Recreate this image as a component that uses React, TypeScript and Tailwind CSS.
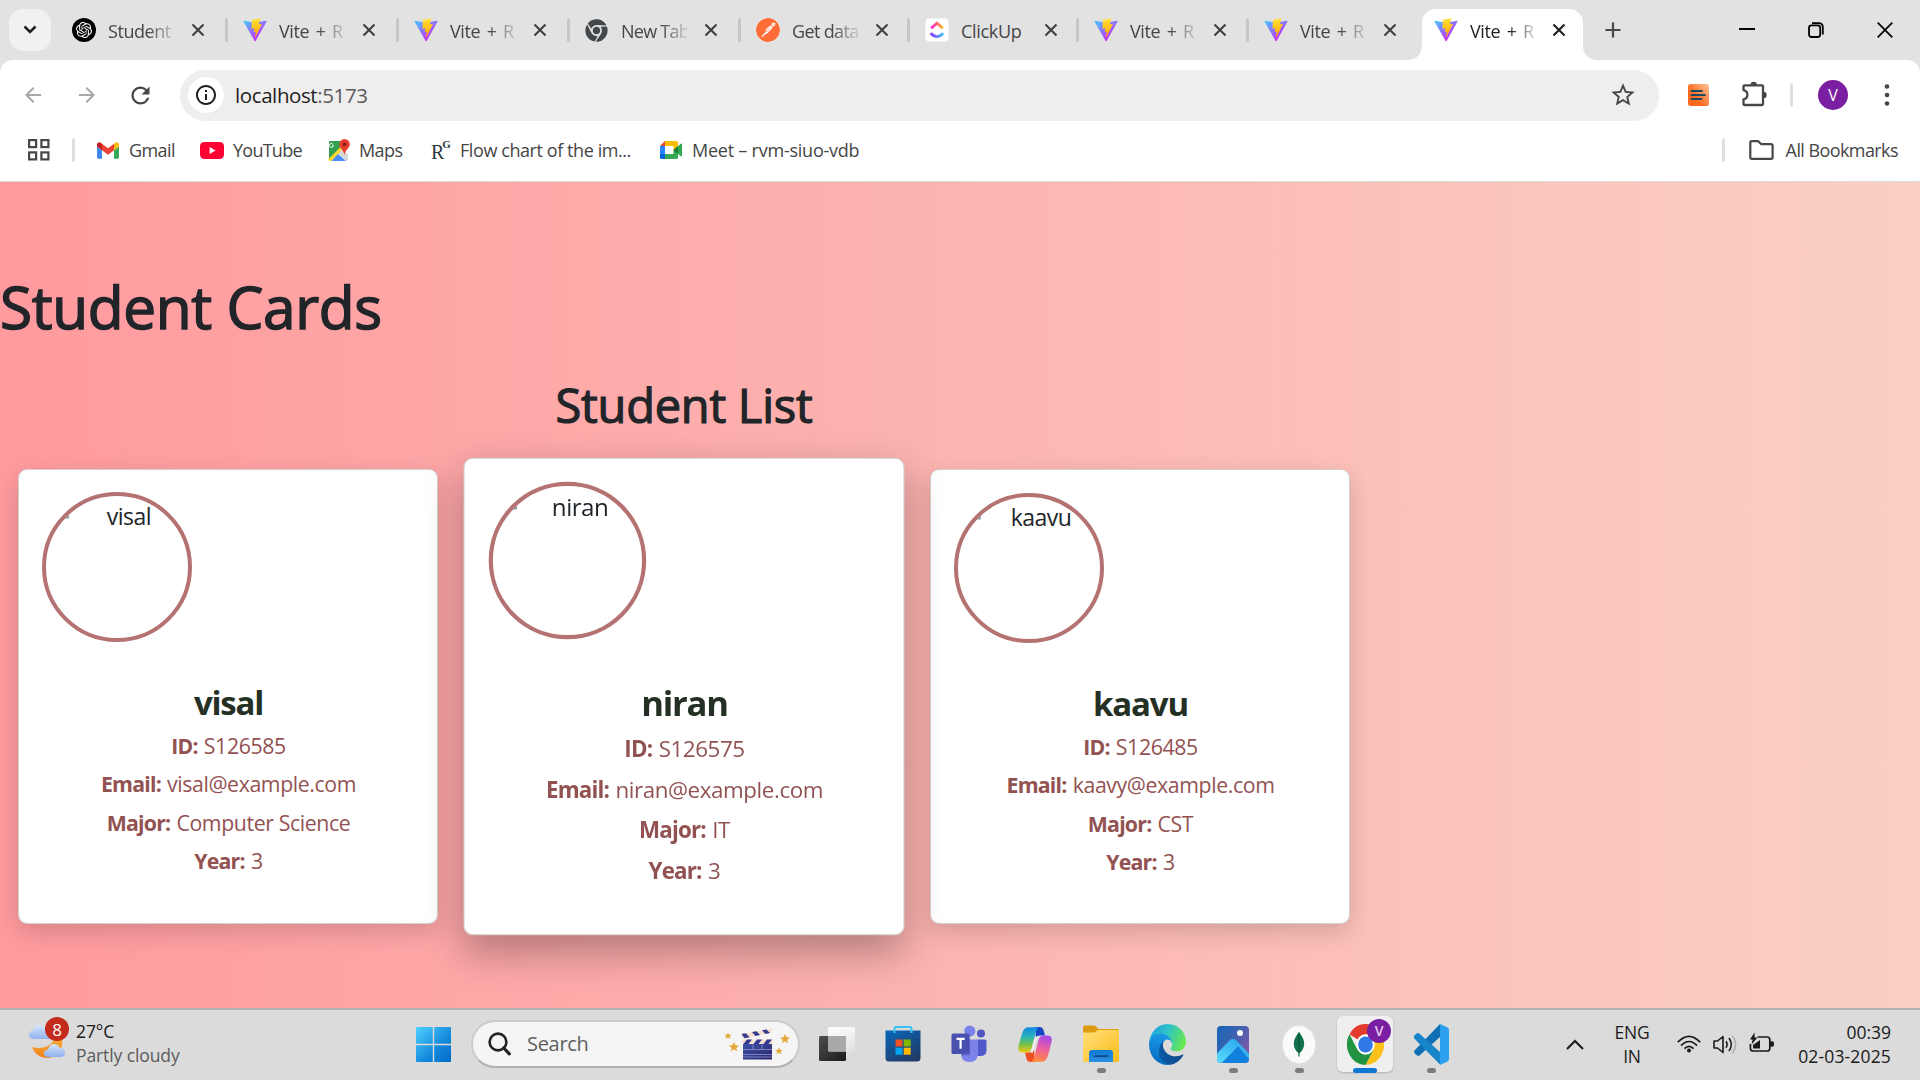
import React from "react";
import { SiOpenai, SiPostman } from "react-icons/si";
import { FaChrome } from "react-icons/fa";
import { MdArrowBack, MdArrowForward, MdRefresh, MdStarBorder, MdInfoOutline } from "react-icons/md";

/* ---------- Small logos ---------- */

function ViteLogo() {
  return (
    <svg width="24" height="24" viewBox="0 0 410 404" fill="none">
      <path d="M399.641 59.5246L215.643 388.545C211.844 395.338 202.084 395.378 198.228 388.618L10.5817 59.5563C6.38087 52.1896 12.6802 43.2665 21.0281 44.7586L205.223 77.6824C206.398 77.8924 207.601 77.8904 208.776 77.6763L389.119 44.8058C397.439 43.2894 403.768 52.1434 399.641 59.5246Z" fill="url(#viteA)" />
      <path d="M292.965 1.5744L156.801 28.2552C154.563 28.6937 152.906 30.5903 152.771 32.8664L144.395 174.33C144.198 177.662 147.258 180.248 150.51 179.498L188.42 170.749C191.967 169.931 195.172 173.055 194.443 176.622L183.18 231.775C182.422 235.487 185.907 238.661 189.532 237.56L212.947 230.446C216.577 229.344 220.065 232.527 219.297 236.242L201.398 322.875C200.278 328.294 207.486 331.249 210.492 326.603L212.5 323.5L323.454 102.072C325.312 98.3645 322.108 94.137 318.036 94.9228L279.014 102.454C275.347 103.161 272.227 99.746 273.262 96.1583L298.731 7.86689C299.767 4.27314 296.636 0.855181 292.965 1.5744Z" fill="url(#viteB)" />
      <defs>
        <linearGradient id="viteA" x1="6" y1="33" x2="235" y2="344" gradientUnits="userSpaceOnUse">
          <stop stopColor="#41D1FF" />
          <stop offset="1" stopColor="#BD34FE" />
        </linearGradient>
        <linearGradient id="viteB" x1="194.65" y1="8.8" x2="236" y2="293" gradientUnits="userSpaceOnUse">
          <stop stopColor="#FFEA83" />
          <stop offset="0.083" stopColor="#FFDD35" />
          <stop offset="1" stopColor="#FFA800" />
        </linearGradient>
      </defs>
    </svg>
  );
}

function OpenAiLogo() {
  return (
    <span className="flex size-6 items-center justify-center rounded-full bg-black text-white">
      <SiOpenai size={16} />
    </span>
  );
}

function ClickUpLogo() {
  return (
    <svg width="24" height="24" viewBox="0 0 24 24" fill="none">
      <defs>
        <linearGradient id="cuA" x1="5" y1="0" x2="19" y2="0" gradientUnits="userSpaceOnUse">
          <stop stopColor="#ff02f0" />
          <stop offset="1" stopColor="#ffc800" />
        </linearGradient>
        <linearGradient id="cuB" x1="5" y1="0" x2="19" y2="0" gradientUnits="userSpaceOnUse">
          <stop stopColor="#8930fd" />
          <stop offset="1" stopColor="#49ccf9" />
        </linearGradient>
      </defs>
      <rect x="0.5" y="0.5" width="23" height="23" rx="4" fill="#fff" />
      <path d="M6.2 10.2 12 5.2l5.8 5" stroke="url(#cuA)" strokeWidth="2.8" />
      <path d="M5.8 15.2c3.5 4.6 8.9 4.6 12.4 0" stroke="url(#cuB)" strokeWidth="2.8" />
    </svg>
  );
}

function CloseX({ dark = false }: { dark?: boolean }) {
  return (
    <svg width="14" height="14" viewBox="0 0 14 14" stroke={dark ? "#1f1f1f" : "#3f3f3f"} strokeWidth="2.1">
      <path d="M1.5 1.5l11 11M12.5 1.5l-11 11" />
    </svg>
  );
}

/* ---------- Tab strip ---------- */

type TabInfo = { icon: React.ReactNode; title: string; box: string; spacing: string; sep?: boolean };

const chromeGrey = <FaChrome size={23} color="#44474a" />;
const postman = <SiPostman size={24} color="#ff6c37" className="rounded-full bg-white" />;
const viteSpacing = "tracking-[-0.4px] [word-spacing:2.2px]";

const tabs: TabInfo[] = [
  { icon: <OpenAiLogo />, title: "Student", box: "w-[171px]", spacing: "tracking-[-0.45px]" },
  { icon: <ViteLogo />, title: "Vite + R", box: "w-[171px]", spacing: viteSpacing },
  { icon: <ViteLogo />, title: "Vite + R", box: "w-[171px]", spacing: viteSpacing },
  { icon: chromeGrey, title: "New Tab", box: "w-[171px]", spacing: "tracking-[-0.75px]" },
  { icon: postman, title: "Get data", box: "w-[169px]", spacing: "tracking-[-0.65px]" },
  { icon: <ClickUpLogo />, title: "ClickUp", box: "w-[169px]", spacing: "tracking-[-0.3px]" },
  { icon: <ViteLogo />, title: "Vite + R", box: "w-[170px]", spacing: viteSpacing },
  { icon: <ViteLogo />, title: "Vite + R", box: "w-[169px]", spacing: viteSpacing, sep: false },
];

const tabTitle = "ml-3 w-[66px] pt-px whitespace-nowrap text-[18px] leading-6";
const tabFade = "[mask-image:linear-gradient(to_right,black_60%,rgba(0,0,0,0.15)_100%)]";

function Tab({ icon, title, box, spacing, sep = true }: TabInfo) {
  return (
    <div className={`flex h-6 shrink-0 items-center pl-[15px] ${box}`}>
      <span className="flex size-6 shrink-0 items-center">{icon}</span>
      <span className={`${tabTitle} text-[#454545] ${spacing} ${title !== "ClickUp" ? tabFade : ""}`}>{title}</span>
      <span className="ml-[17px] shrink-0">
        <CloseX />
      </span>
      {sep && <span className="ml-auto h-6 w-[3px] rounded-full bg-[#c6c6c6]" />}
    </div>
  );
}

function TabStrip() {
  return (
    <div className="flex h-[60px] items-center bg-[#e2e2e2]">
      <div className="ml-[9px] flex size-[42px] shrink-0 items-center justify-center rounded-[14px] bg-[#f1f1f1]">
        <svg width="14" height="10" viewBox="0 0 14 10" fill="none" stroke="#1f1f1f" strokeWidth="2.5">
          <path d="M1.5 1.5 7 7l5.5-5.5" />
        </svg>
      </div>
      <div className="ml-1.5 flex items-center">
        {tabs.map((t, i) => (
          <Tab key={i} {...t} />
        ))}
      </div>
      <div className="flex h-[60px] shrink-0 items-end">
        <svg className="-ml-[10px]" width="14" height="14" viewBox="0 0 14 14" fill="#fff">
          <path d="M0 14C8 14 14 8 14 0V14z" />
        </svg>
        <div className="flex h-[51px] w-[161px] items-center rounded-t-[14px] bg-white pb-[9px] pl-3">
          <ViteLogo />
          <span className={`${tabTitle} text-[#1f1f1f] ${viteSpacing} ${tabFade}`}>Vite + R</span>
          <span className="ml-[16px]">
            <CloseX dark />
          </span>
        </div>
        <svg width="14" height="14" viewBox="0 0 14 14" fill="#fff">
          <path d="M14 14C6 14 0 8 0 0V14z" />
        </svg>
      </div>
      <svg className="ml-2" width="16" height="16" viewBox="0 0 16 16" stroke="#474747" strokeWidth="2.2">
        <path d="M8 0.5v15M0.5 8h15" />
      </svg>
      <div className="ml-auto flex items-center pr-[27px]">
        <svg width="16" height="16" viewBox="0 0 16 16" stroke="#000" strokeWidth="2">
          <path d="M0 7h16" />
        </svg>
        <svg className="ml-[53px]" width="16" height="16" viewBox="0 0 16 16" stroke="#000" strokeWidth="1.8" fill="none">
          <rect x="1" y="3.4" width="11.2" height="11.6" rx="2.5" />
          <path d="M4 1.2h7.2a3.6 3.6 0 0 1 3.6 3.6v7.6" />
        </svg>
        <svg className="ml-[53px]" width="16" height="16" viewBox="0 0 16 16" stroke="#000" strokeWidth="1.7">
          <path d="M0.7 0.7l14.6 14.6M15.3 0.7L0.7 15.3" />
        </svg>
      </div>
    </div>
  );
}

/* ---------- Toolbar ---------- */

function Toolbar() {
  return (
    <div className="flex h-[69px] items-center pt-px text-[#474747]">
      <MdArrowBack size={24} color="#a8a8a8" className="ml-[21px]" />
      <MdArrowForward size={24} color="#a8a8a8" className="ml-[30px]" />
      <MdRefresh size={27} className="ml-[28px]" />
      <div className="ml-[26px] flex h-[51px] w-[1479px] items-center rounded-full bg-[#efedee]">
        <div className="ml-2 flex size-9 items-center justify-center rounded-full bg-white">
          <MdInfoOutline size={24} color="#1f1f1f" />
        </div>
        <span className="ml-[11px] text-[20.5px] leading-6 tracking-[-0.4px] text-[#5a5a5a]">
          <span className="text-[#1f1f1f]">localhost</span>:5173
        </span>
        <MdStarBorder size={28} className="mr-[22px] ml-auto" />
      </div>
      <svg className="ml-[29px]" width="22" height="22" viewBox="0 0 22 22">
        <defs>
          <linearGradient id="ext" x1="1" y1="0" x2="0.3" y2="0.6">
            <stop stopColor="#ffc29b" />
            <stop offset="1" stopColor="#fb6a1c" />
          </linearGradient>
        </defs>
        <rect width="21" height="22" rx="2.5" fill="url(#ext)" />
        <path d="M3.5 7h10.5M3.5 11h13.5M3.5 15h10" stroke="#1d4a60" strokeWidth="1.8" strokeLinecap="round" />
      </svg>
      <svg className="ml-[31px] mb-0.5" width="26" height="26" viewBox="0 0 26 26" fill="none" stroke="#474747" strokeWidth="2.3">
        <path d="M3.5 4.3H21a1 1 0 0 1 1 1V23a1 1 0 0 1-1 1H3.5a1 1 0 0 1-1-1v-4.6c5.2-1.3 5.2-8 0-9.3V5.3a1 1 0 0 1 1-1z" strokeLinejoin="round" />
        <path d="M9.5 4a3.2 3.2 0 0 1 6.4 0zM22.5 10.800a3 3 0 0 1 0 6.400z" fill="#474747" stroke="none" />
      </svg>
      <span className="ml-[23px] h-6 w-[3px] rounded-full bg-[#e0e0e0]" />
      <span className="ml-[25px] flex size-[30px] items-center justify-center rounded-full bg-[#7b1fa2] text-[16px] leading-none text-white">V</span>
      <svg className="ml-[36px]" width="6" height="22" viewBox="0 0 6 22" fill="#474747">
        <circle cx="3" cy="2.5" r="2.3" />
        <circle cx="3" cy="11" r="2.3" />
        <circle cx="3" cy="19.5" r="2.3" />
      </svg>
    </div>
  );
}

/* ---------- Bookmarks ---------- */

function BookmarksBar() {
  return (
    <div className="flex h-[51px] items-center pb-[9px] text-[18px] leading-6 text-[#454545]">
      <svg className="ml-7 shrink-0" width="22" height="22" viewBox="0 0 22 22" fill="none" stroke="#474747" strokeWidth="2.2">
        <rect x="1.1" y="1.1" width="7" height="7" />
        <rect x="13.4" y="1.1" width="7" height="7" />
        <rect x="1.1" y="13.4" width="7" height="7" />
        <rect x="13.4" y="13.4" width="7" height="7" />
      </svg>
      <span className="ml-[22px] h-6 w-[3px] rounded-full bg-[#dfdfdf]" />
      <div className="ml-[22px] flex w-[103px] items-center gap-[10px]">
        <svg width="22" height="17" viewBox="52 42 88 66">
          <path fill="#4285f4" d="M58 108h14V74L52 59v43c0 3.320 2.690 6 6 6" />
          <path fill="#34a853" d="M120 108h14c3.320 0 6-2.690 6-6V59l-20 15" />
          <path fill="#fbbc04" d="M120 48v26l20-15v-8c0-7.420-8.470-11.650-14.400-7.200" />
          <path fill="#ea4335" d="M72 74V48l24 18 24-18v26L96 92" />
          <path fill="#c5221f" d="M52 51v8l20 15V48l-5.600-4.200c-5.940-4.450-14.400-.220-14.400 7.200" />
        </svg>
        <span className="tracking-[-0.6px]">Gmail</span>
      </div>
      <div className="flex w-[128px] items-center gap-[9px]">
        <svg width="24" height="17" viewBox="0 0 24 17">
          <rect width="24" height="17" rx="4.2" fill="#ff0033" />
          <path d="M9.6 5v7l6-3.5z" fill="#fff" />
        </svg>
        <span className="tracking-[-0.75px]">YouTube</span>
      </div>
      <div className="flex w-[104px] items-center gap-[9px]">
        <svg width="22" height="22" viewBox="0 0 22 22">
          <path d="M1.5 2H14v8l-7 7-6 5V2.8z" fill="#34a04f" />
          <path d="M0 20.5 14 6.5l3 2.5L3.5 22H1.500z" fill="#fdd835" />
          <path d="M10 15l8 7H3.5z" fill="#4a8df8" />
          <path d="M14 10.5 20 15v5.5q0 1.500-2 1.500L10.500 14.500z" fill="#d8d8d8" />
          <path d="M4.5 7.5a2 2 0 1 1-.5-2M5 6.800H3.300" stroke="#fff" strokeWidth="1" fill="none" transform="translate(.8 -.5)" />
          <path d="M16.5 0a5.300 5.300 0 0 1 5.300 5.300c0 4-4.300 5.200-5.300 10.700-1-5.500-5.300-6.700-5.300-10.700A5.300 5.300 0 0 1 16.500 0z" fill="#e5402f" />
          <circle cx="16.5" cy="5.4" r="1.9" fill="#8c1c13" />
        </svg>
        <span className="tracking-[-0.6px]">Maps</span>
      </div>
      <div className="flex w-[228px] items-center">
        <span className="-ml-px flex w-[29px] items-start pt-[3px] font-['Liberation_Serif'] text-[20px] leading-6 text-[#2b3b3b]">
          R<span className="-mt-0.5 -ml-0.5 text-[11px] leading-[12px] font-bold">G</span>
        </span>
        <span className="whitespace-nowrap tracking-[-0.42px]">Flow chart of the im...</span>
      </div>
      <div className="flex items-center gap-[10px]">
        <svg width="22" height="18" viewBox="0 0 22 18">
          <path d="M5 0v5H0z" fill="#ea4335" />
          <path d="M5 0h11.500q1.500 0 1.500 1.500V7l-4.500 3V5H5z" fill="#fbbc04" />
          <path d="M0 5h5v8.500H0z" fill="#2684fc" />
          <path d="M0 13h5v5H1.500Q0 18 0 16.500z" fill="#0066da" />
          <path d="M5 13h8.500V9.500L18 8v8.500q0 1.500-1.500 1.500H5z" fill="#34a853" />
          <path d="M13.500 9 20.800 2.800q1.200-.8 1.200.6v11.200q0 1.400-1.200.6z" fill="#34a853" />
          <path d="M13.500 9 18 5.200v7.600z" fill="#188038" />
        </svg>
        <span className="whitespace-nowrap tracking-[-0.23px]">Meet – rvm-siuo-vdb</span>
      </div>
      <span className="ml-auto h-6 w-[3px] rounded-full bg-[#dfdfdf]" />
      <svg className="ml-6" width="25" height="22" viewBox="0 0 25 22" fill="none" stroke="#474747" strokeWidth="2.2" strokeLinejoin="round">
        <path d="M3 2.200h6.200l2.800 2.900h10q1.600 0 1.600 1.600v11.500q0 1.600-1.600 1.600H3q-1.700 0-1.700-1.600V3.800Q1.300 2.200 3 2.200z" />
      </svg>
      <span className="mr-[22px] ml-3 tracking-[-0.58px]">All Bookmarks</span>
    </div>
  );
}

/* ---------- Page ---------- */

type Student = { name: string; id: string; email: string; major: string; year: number };

const students: Student[] = [
  { name: "visal", id: "S126585", email: "visal@example.com", major: "Computer Science", year: 3 },
  { name: "niran", id: "S126575", email: "niran@example.com", major: "IT", year: 3 },
  { name: "kaavu", id: "S126485", email: "kaavy@example.com", major: "CST", year: 3 },
];

function Field({ label, value }: { label: string; value: string | number }) {
  return (
    <p className="h-[38.5px] text-center text-[21.3px] leading-[32px] tracking-[-0.4px] text-[#935252]">
      <b className="mr-px font-bold tracking-[-0.8px]">{label}:</b> {value}
    </p>
  );
}

function StudentCard({ student, raised, pad }: { student: Student; raised: boolean; pad: string }) {
  return (
    <div
      className={`h-[455px] w-[420px] rounded-[9px] border-[1.5px] border-[#d4cfcf] bg-white pr-[22px] pl-[23px] ${pad} ${
        raised ? "z-10 scale-105 shadow-[0_15px_38px_rgba(0,0,0,0.3)]" : "shadow-[0_8px_24px_rgba(0,0,0,0.16)]"
      }`}
    >
      <div className="relative flex size-[150px] items-start justify-center overflow-hidden rounded-full border-4 border-[#b57272]">
        <svg className="absolute -top-px left-[1px]" width="24" height="24" viewBox="0 0 24 24">
          <path d="M3 2h13l5 5v15.5H3z" fill="#e8eef5" stroke="#8f9396" strokeWidth="1.8" />
          <path d="M4 21l9-7 7 6v1.600H4z" fill="#6fae7a" />
        </svg>
        <span className="ml-6 mt-[5px] text-[23px] leading-[30px] tracking-[-0.5px] text-[#212529]">{student.name}</span>
      </div>
      <h3 className="mt-[41px] text-center text-[33px] leading-[40px] font-bold tracking-[-1.2px] text-[#243024]">{student.name}</h3>
      <div className="mt-[7px]">
        <Field label="ID" value={student.id} />
        <Field label="Email" value={student.email} />
        <Field label="Major" value={student.major} />
        <Field label="Year" value={student.year} />
      </div>
    </div>
  );
}

function Page() {
  return (
    <main className="h-[826px] overflow-hidden bg-[linear-gradient(to_right,#ff9a9e,#fad0c4)]">
      <h1 className="pt-[88px] text-[58.5px] leading-[72px] font-medium tracking-[-0.35px] text-[#212529] [-webkit-text-stroke:1.500px_#212529]">Student Cards</h1>
      <section className="w-[1368px]">
        <h2 className="mt-[34px] text-center text-[47px] leading-[58px] font-medium tracking-[-0.25px] text-[#212529] [-webkit-text-stroke:1.200px_#212529]">Student List</h2>
        <div className="mt-[34.5px] grid grid-cols-3 justify-items-center">
          {students.map((s, i) => (
            <StudentCard key={s.id} student={s} raised={i === 1} pad={i === 2 ? "pt-[23px]" : "pt-[22px]"} />
          ))}
        </div>
      </section>
    </main>
  );
}

/* ---------- Taskbar icons ---------- */

function WindowsLogo() {
  return (
    <svg width="35" height="35" viewBox="0 0 35 35">
      <defs>
        <linearGradient id="win" x1="0" y1="0" x2="35" y2="35" gradientUnits="userSpaceOnUse">
          <stop stopColor="#4fd2ff" />
          <stop offset="0.6" stopColor="#1489dc" />
          <stop offset="1" stopColor="#0069c8" />
        </linearGradient>
      </defs>
      <path fill="url(#win)" d="M1 0h15.800v16.800H0V1Q0 0 1 0zM18.200 0H34q1 0 1 1v15.800H18.200zM0 18.200h16.800V35H1q-1 0-1-1zM18.200 18.200H35V34q0 1-1 1H18.200z" />
    </svg>
  );
}

function Clapper() {
  const star = "M0-4.500 1.300-1.500 4.400-1.300 2 .8 2.800 3.800 0 2-2.800 3.800-2 .8-4.400-1.300-1.300-1.500z";
  return (
    <svg width="68" height="34" viewBox="0 0 68 34">
      <defs>
        <linearGradient id="clap" x1="0" y1="0" x2="1" y2="1">
          <stop stopColor="#3d52a8" />
          <stop offset="1" stopColor="#2c2569" />
        </linearGradient>
      </defs>
      <g fill="#e3a838">
        <path d={star} transform="translate(5 9) scale(.8)" />
        <path d={star} transform="translate(11 20) scale(1.15)" />
        <path d={star} transform="translate(62 12) scale(1.1)" />
        <path d={star} transform="translate(56 24) scale(.85)" />
      </g>
      <rect x="20" y="17" width="29" height="15.5" fill="url(#clap)" />
      <path d="M20 22.500h29M20 27.500h29M20 30h29M30 17.500v5M39 17.500v5" stroke="#8d97d6" strokeWidth="0.8" />
      <path d="M18.500 7 48.500 1.500 49.300 5.500 19.500 11.500z" fill="#f5dfd0" />
      <path d="M18.500 7l4.500-.8 3.500 4-5 1zM29 5l4.500-.8 3.500 3.900-4.500.9zM39 3.200l4.500-.8 3.500 3.700-4.500.9z" fill="#343a92" />
      <path d="M19.500 12.500h30V17h-30z" fill="#f5dfd0" />
      <path d="M24 12.500h5L25.500 17h-5zM34 12.500h5L35.500 17h-5zM44 12.500h5L45.500 17h-5z" fill="#343a92" />
    </svg>
  );
}

function TaskView() {
  return (
    <svg width="36" height="34" viewBox="0 0 36 34">
      <defs>
        <linearGradient id="tvA" x1="0" y1="0" x2="1" y2="1"><stop stopColor="#4e4e4e" /><stop offset="1" stopColor="#1b1b1b" /></linearGradient>
        <linearGradient id="tvB" x1="0" y1="0" x2="0.3" y2="1"><stop stopColor="#fff" /><stop offset="1" stopColor="#e4e4e4" /></linearGradient>
      </defs>
      <rect x="0" y="9" width="27" height="25" rx="1.5" fill="url(#tvA)" />
      <rect x="9" y="0" width="27" height="24.5" rx="1.5" fill="url(#tvB)" />
      <path d="M9 9h18v15.500H10.500Q9 24.500 9 23z" fill="#a9a9a9" />
    </svg>
  );
}

function StoreIcon() {
  return (
    <svg width="36" height="36" viewBox="0 0 36 36">
      <defs>
        <linearGradient id="store" x1="0" y1="0" x2="0.6" y2="1"><stop stopColor="#0a67bb" /><stop offset="1" stopColor="#1f3c69" /></linearGradient>
      </defs>
      <path d="M0.500 4.500h35V32q0 3.500-3.500 3.500H4Q.5 35.500.5 32z" fill="url(#store)" />
      <path d="M9.500 7V2.500Q9.500 1 11 1h14q1.500 0 1.500 1.500V7" fill="none" stroke="#35c5f5" strokeWidth="2" />
      <path d="M10.500 13.500h7v7h-7z" fill="#f25022" />
      <path d="M18.700 13.500h7v7h-7z" fill="#7fba00" />
      <path d="M10.500 21.700h7v7h-7z" fill="#00a4ef" />
      <path d="M18.700 21.700h7v7h-7z" fill="#ffb900" />
    </svg>
  );
}

function TeamsIcon() {
  return (
    <svg width="36" height="38" viewBox="0 0 36 38">
      <circle cx="30" cy="8.500" r="4" fill="#4f55c0" />
      <circle cx="18.800" cy="6" r="5.600" fill="#7b83eb" />
      <path d="M26 14.500h8q1.500 0 1.500 1.500v9q0 6-6 6h-3.500z" fill="#5059c9" />
      <path d="M11 14.500h14.500q1.500 0 1.500 1.500v12q0 9-8.500 9T10 28.500V15.500z" fill="#7b83eb" />
      <path d="M11 9.500h6.500q1.500 0 1.500 1.500v18q0 1.500-1.500 1.500h-7z" fill="#3f45a5" opacity="0.4" />
      <rect x="0.500" y="8.500" width="18" height="20.500" rx="1.500" fill="#4950b0" />
      <path d="M5.500 13.800h8.200M9.600 13.800v10" stroke="#fff" strokeWidth="2.2" />
    </svg>
  );
}

function CopilotIcon() {
  return (
    <svg width="34" height="35" viewBox="0 0 34 35">
      <defs>
        <linearGradient id="cpA" x1="0.3" y1="0" x2="0.3" y2="1"><stop stopColor="#118be8" /><stop offset="0.4" stopColor="#2cb6b0" /><stop offset="0.7" stopColor="#7cc243" /><stop offset="1" stopColor="#f2c811" /></linearGradient>
        <linearGradient id="cpB" x1="0.6" y1="0" x2="0.4" y2="1"><stop stopColor="#a64be8" /><stop offset="0.5" stopColor="#ee5f9d" /><stop offset="1" stopColor="#ff8a3c" /></linearGradient>
      </defs>
      <path d="M17 0h4.500q3 0 4 3l1.500 5.500h-5q-3 0-4 3z" fill="#1746c8" />
      <path d="M17 35h-4.500q-3 0-4-3L7 25.500h5q3 0 4-3z" fill="#ee5026" />
      <path d="M10 .2h11q-2 .5-3 4L13.500 21q-1.300 4.500-5 4.500H4.500Q-.8 25.500.5 19L4 6.500Q6 .2 10 .2z" fill="url(#cpA)" />
      <path d="M24 34.800H13q2-.5 3-4L20.500 13q1.300-4.500 5-4.500h4q5.300 0 4 6.500L30 28.500q-2 6.300-6 6.300z" fill="url(#cpB)" />
      <path d="M20 9.500q-2 1-3 4.500l-2 8q-.8 3-1.500 3.500" stroke="#f7f0f2" strokeWidth="1.8" fill="none" />
    </svg>
  );
}

function ExplorerIcon() {
  return (
    <svg width="36" height="38" viewBox="0 0 36 38">
      <defs>
        <linearGradient id="fold" x1="0" y1="0" x2="1" y2="1"><stop stopColor="#ffe07a" /><stop offset="1" stopColor="#fbbd1a" /></linearGradient>
        <linearGradient id="drawer" x1="0" y1="0" x2="0" y2="1"><stop stopColor="#0f7dd4" /><stop offset="1" stopColor="#2a8fe0" /></linearGradient>
      </defs>
      <path d="M0 2Q0 .5 1.500.5h9Q12 .5 13 1.500L15.500 4H34.500q1.500 0 1.500 1.500V12H0z" fill="#dc9c0c" />
      <path d="M0 7.500h10.500q1.500 0 2.500-1L15 5h19.500Q36 5 36 6.500v29q0 1.500-1.500 1.500h-33Q0 37 0 35.500z" fill="url(#fold)" />
      <path d="M6 37V28q0-3 3-3h18q3 0 3 3v9z" fill="url(#drawer)" />
      <path d="M12 31.200h12.500" stroke="#0a4b86" strokeWidth="1.800" strokeLinecap="round" />
    </svg>
  );
}

function EdgeIcon() {
  return (
    <svg width="37" height="41" viewBox="0 0 256 256" preserveAspectRatio="none">
      <defs>
        <linearGradient id="edA" x1="10%" y1="60%" x2="100%" y2="60%"><stop stopColor="#0c59a4" /><stop offset="1" stopColor="#114a8b" /></linearGradient>
        <linearGradient id="edB" x1="60%" y1="0" x2="20%" y2="100%"><stop stopColor="#1b9de2" /><stop offset="0.500" stopColor="#1385d9" /><stop offset="1" stopColor="#0067b8" /></linearGradient>
        <linearGradient id="edC" x1="0" y1="30%" x2="100%" y2="60%"><stop stopColor="#199fe0" /><stop offset="0.450" stopColor="#2fc3c8" /><stop offset="1" stopColor="#6bea4c" /></linearGradient>
      </defs>
      <path fill="url(#edA)" d="M231 190.500c-3.400 1.800-6.900 3.400-10.500 4.700a101.900 101.900 0 0 1-35.900 6.500c-47.300 0-88.500-32.500-88.500-74.300a31.500 31.500 0 0 1 16.400-27.300c-42.800 1.800-53.800 46.400-53.800 72.500 0 74 68.100 81.400 82.800 81.400 7.900 0 19.800-2.300 27-4.600l1.300-.4a128.300 128.300 0 0 0 66.600-52.800 4 4 0 0 0-5.400-5.700z" />
      <path fill="url(#edB)" d="M105.700 241.400a79.200 79.200 0 0 1-22.700-21.300 80.700 80.700 0 0 1 29.500-120c3.200-1.500 8.500-4.100 15.600-4a32.400 32.400 0 0 1 25.700 13 31.900 31.900 0 0 1 6.300 18.700c0-.2 24.500-79.600-80-79.600-43.900 0-80 41.700-80 78.200a130.200 130.200 0 0 0 12.100 56 128 128 0 0 0 156.400 67 75.500 75.500 0 0 1-62.800-8z" />
      <path fill="url(#edC)" d="M152.300 148.900c-.9 1-3.400 2.500-3.400 5.600 0 2.600 1.700 5.200 4.800 7.300 14.300 10 41.400 8.600 41.500 8.600a59.600 59.600 0 0 0 30.300-8.300 61.400 61.400 0 0 0 30.400-52.900c.3-22.400-8-37.300-11.300-43.900C223.500 23.900 177.700 0 128 0A128 128 0 0 0 0 126.200c.5-36.500 36.800-66 80-66 3.500 0 23.500.3 42 10 16.300 8.600 24.900 19 30.800 29.200 6.200 10.700 7.300 24.100 7.300 29.500 0 5.300-2.700 13.300-7.800 20z" />
    </svg>
  );
}

function PhotosIcon() {
  return (
    <svg width="32" height="37" viewBox="0 0 32 37">
      <defs>
        <linearGradient id="phA" x1="0" y1="0" x2="1" y2="0.7"><stop stopColor="#1565b8" /><stop offset="0.5" stopColor="#3d62b0" /><stop offset="1" stopColor="#8658a8" /></linearGradient>
        <linearGradient id="phB" x1="0" y1="1" x2="1" y2="0"><stop stopColor="#5ce0ff" /><stop offset="1" stopColor="#1f9ce8" /></linearGradient>
        <clipPath id="phC"><rect width="32" height="37" rx="4" /></clipPath>
      </defs>
      <g clipPath="url(#phC)">
        <rect width="32" height="37" fill="url(#phA)" />
        <path d="M-2 29.500 12.500 14.500q3.500-3.500 7 0L35 31v6L21 20.500 5 37H-2z" fill="url(#phB)" />
        <path d="M21 20.500 34 35v2H5z" fill="#0f80dc" />
        <circle cx="23" cy="7" r="3" fill="#fff" />
      </g>
    </svg>
  );
}

function MongoIcon() {
  return (
    <svg width="34" height="39" viewBox="0 0 34 39">
      <ellipse cx="17" cy="19.500" rx="16.500" ry="19" fill="#fafafa" stroke="#e6e6e6" />
      <path d="M17 7c3 4 5.200 7.300 5.200 11.700 0 4.500-2.200 7.300-4.600 9.300v3.500h-1.200V28c-2.400-2-4.600-4.800-4.600-9.300 0-4.400 2.200-7.700 5.200-11.700z" fill="#10734c" />
      <path d="M17 7.500v20" stroke="#0a4d34" strokeWidth="0.9" />
    </svg>
  );
}

function ChromeIcon() {
  return (
    <svg width="37" height="41" viewBox="0 0 48 48" preserveAspectRatio="none">
      <path d="M24 24 3.200 12A24 24 0 0 1 44.800 12H24z" fill="#e33b2e" />
      <path d="M44.800 12A24 24 0 0 1 24 48L34.400 30 24 12z" fill="#fcc21b" />
      <path d="M24 48A24 24 0 0 1 3.200 12l10.400 18L34.400 30z" fill="#229342" />
      <circle cx="24" cy="24" r="12" fill="#fff" />
      <circle cx="24" cy="24" r="9.500" fill="#2f78e8" />
    </svg>
  );
}

function CodeIcon() {
  return (
    <svg width="36" height="41" viewBox="0 0 36 41">
      <path d="M27 0 2.200 25.800Q0 28 2 29.800l2.300 1.800q1 .7 2.200-.2L27 13z" fill="#0f6fb3" />
      <path d="M27 40.500 1.500 14.800Q0 13 1.500 11.300L4 9.200q1-.7 2.200.2L27 28z" fill="#1784ca" />
      <path d="M27 0 34.500 3.500Q36 4.300 36 6v29q0 1.700-1.500 2.500L27 41z" fill="#2ba0ee" />
    </svg>
  );
}

function WeatherIcon() {
  return (
    <svg width="40" height="44" viewBox="0 0 40 44">
      <defs>
        <linearGradient id="cloud" x1="0" y1="0" x2="0" y2="1"><stop stopColor="#d5e4fc" /><stop offset="1" stopColor="#8fb2ec" /></linearGradient>
        <linearGradient id="moon" x1="0" y1="0" x2="0" y2="1"><stop stopColor="#f7b733" /><stop offset="1" stopColor="#ef8120" /></linearGradient>
      </defs>
      <path d="M32 16c4 10-1 23-13 24-8 .5-14-5-16-11 9 3 22 0 24-13z" fill="url(#moon)" />
      <path d="M5 21q-4.500 0-5-4.300 0-4.200 4.300-4.500Q6 7 10.500 7q4 0 6 4 4-.5 5.500 3V21z" fill="url(#cloud)" />
      <path d="M19 39q-4 0-4-3.500t4-3.800q1.300-5.500 6-5.700 4.300 0 6 4.300 5 .2 5 4.500 0 4.200-4.500 4.200z" fill="url(#cloud)" />
    </svg>
  );
}

function TaskCell({ children, open = false }: { children: React.ReactNode; open?: boolean }) {
  return (
    <div className="relative flex h-[68px] w-[66px] shrink-0 items-center justify-center">
      {children}
      {open && <span className="absolute bottom-[5px] left-[29px] h-[5px] w-[9px] rounded-full bg-[#7c7c7c]" />}
    </div>
  );
}

function Taskbar() {
  return (
    <footer className="flex h-[72px] items-start border-t-2 border-[#b0b0b0] bg-[#dbdbdb] text-[#1a1a1a]">
      <div className="flex w-[400px] shrink-0 items-start pl-[29px]">
        <div className="relative mt-[8px] h-11 w-10">
          <WeatherIcon />
          <span className="absolute -top-[1px] left-4 flex size-6 items-center justify-center rounded-full bg-[#c42b1c] text-[17px] leading-none text-white">8</span>
        </div>
        <div className="ml-[7px] pt-[9px] text-[17.5px] leading-6">
          <div className="tracking-[-0.1px]">27°C</div>
          <div className="tracking-[-0.1px] text-[#5c5c5c]">Partly cloudy</div>
        </div>
      </div>
      <div className="flex h-[69px] w-[71px] shrink-0 items-center pl-4">
        <WindowsLogo />
      </div>
      <div className="mt-[10px] mr-[4px] flex h-[48px] w-[329px] shrink-0 items-center rounded-full border-2 border-[#cbcbcb] border-b-[#b0b0b0] bg-[#f5f5f5] pl-[15px]">
        <svg width="23" height="24" viewBox="0 0 23 24" fill="none" stroke="#222" strokeWidth="2.6">
          <circle cx="10" cy="10" r="8.400" />
          <path d="M15.800 16l5.500 5.800" strokeWidth="3.2" strokeLinecap="round" />
        </svg>
        <span className="ml-4 text-[20px] leading-6 tracking-[-0.3px] text-[#5f5f5f]">Search</span>
        <span className="mr-[7px] ml-auto"><Clapper /></span>
      </div>
      <div className="flex">
        <TaskCell><TaskView /></TaskCell>
        <TaskCell><StoreIcon /></TaskCell>
        <TaskCell><TeamsIcon /></TaskCell>
        <TaskCell><CopilotIcon /></TaskCell>
        <TaskCell open><ExplorerIcon /></TaskCell>
        <TaskCell><EdgeIcon /></TaskCell>
        <TaskCell open><PhotosIcon /></TaskCell>
        <TaskCell open><MongoIcon /></TaskCell>
        <div className="relative flex h-[68px] w-[66px] items-start justify-center pt-[6px]">
          <div className="flex h-[56px] w-[56px] items-center justify-center rounded-[6px] bg-[#efefef] shadow-[0_1px_2px_rgba(0,0,0,0.2)]">
            <ChromeIcon />
          </div>
          <span className="absolute top-[9px] left-[35px] flex size-6 items-center justify-center rounded-full bg-[#7b1fa2] text-[14px] leading-none font-semibold text-[#e4c8ef]">V</span>
          <span className="absolute bottom-[5px] left-[21px] h-[5px] w-6 rounded-full bg-[#0f78d4]" />
        </div>
        <TaskCell open><CodeIcon /></TaskCell>
      </div>
      <div className="ml-auto flex h-[68px] items-center pr-[29px] text-[17.5px] leading-6">
        <svg width="18" height="11" viewBox="0 0 18 11" fill="none" stroke="#1a1a1a" strokeWidth="2">
          <path d="M1 10 9 2l8 8" />
        </svg>
        <div className="ml-[28px] w-[40px] text-center tracking-[-0.2px]">
          <div>ENG</div>
          <div>IN</div>
        </div>
        <svg className="ml-[25px]" width="24" height="18" viewBox="0 0 24 18" fill="none" stroke="#1a1a1a" strokeWidth="1.7">
          <path d="M.8 7.200Q12-4.600 23.200 7.200M4 10.600q8-8.200 16 0M7.400 13.700q4.600-4.600 9.200 0" />
          <circle cx="12" cy="15.600" r="2" fill="#1a1a1a" stroke="none" />
        </svg>
        <svg className="ml-3" width="25" height="21" viewBox="0 0 25 21" fill="none" stroke="#1a1a1a" strokeWidth="1.6" strokeLinejoin="round">
          <path d="M1 7v7h3.500L10 18.500v-16L4.500 7z" />
          <path d="M13 7.200q2.200 3.300 0 6.600M16 4q4.600 6.500 0 13" />
          <path d="M19.300 1.500q6.600 9 0 18" stroke="#b0b0b0" />
        </svg>
        <svg className="mb-[3px] ml-[11px]" width="25" height="22" viewBox="0 0 25 22" fill="none" stroke="#1a1a1a" strokeWidth="1.7">
          <path d="M8.500 5H18q2.800 0 2.800 2.800v8.400Q20.800 19 18 19H4.200q-2.800 0-2.800-2.800V12" />
          <path d="M21.500 10h1.600q1 0 1 1v2q0 1-1 1h-1.600z" fill="#1a1a1a" />
          <path d="M4 16.500V13l7-5v8.500z" fill="#1a1a1a" stroke="none" />
          <path d="M5.500.5 1 7.500h2.600L2.600 12.500 8.500 5.500H5.600z" fill="#1a1a1a" stroke="none" />
        </svg>
        <div className="ml-[22px] w-[95px] text-right whitespace-nowrap">
          <div>00:39</div>
          <div className="tracking-[0.15px]">02-03-2025</div>
        </div>
      </div>
    </footer>
  );
}

export default function App() {
  return (
    <div className="flex h-[1080px] w-[1920px] flex-col overflow-hidden bg-white font-['Open_Sans','Noto_Sans',sans-serif]">
      <TabStrip />
      <div className="h-[122px] bg-[#e2e2e2]">
        <div className="h-[122px] rounded-t-[13px] border-b border-[#dcdcdc] bg-white">
          <Toolbar />
          <BookmarksBar />
        </div>
      </div>
      <Page />
      <Taskbar />
    </div>
  );
}
